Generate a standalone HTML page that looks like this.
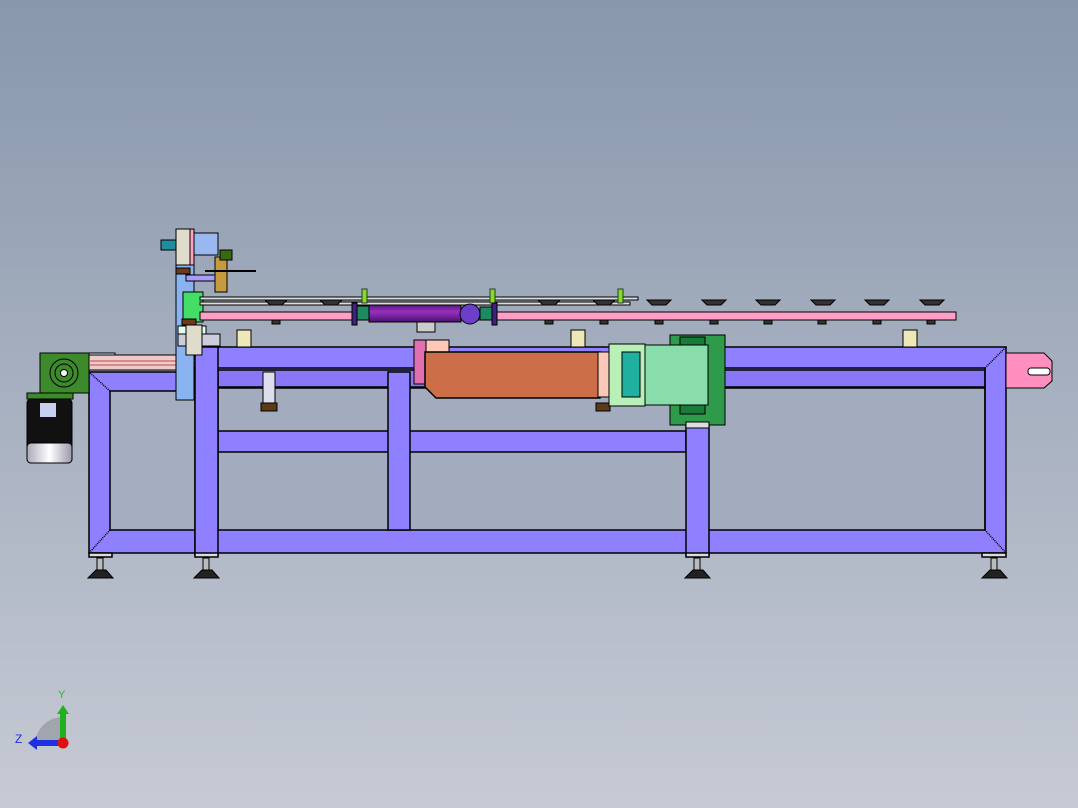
<!DOCTYPE html>
<html><head><meta charset="utf-8"><style>
html,body{margin:0;padding:0;width:1078px;height:808px;overflow:hidden}
svg{display:block}
</style></head><body>
<svg width="1078" height="808" viewBox="0 0 1078 808" xmlns="http://www.w3.org/2000/svg">
<defs>
<linearGradient id="bg" x1="0" y1="0" x2="0" y2="1">
<stop offset="0" stop-color="#8897ac"/><stop offset="1" stop-color="#c6cad4"/>
</linearGradient>
<linearGradient id="cyl" x1="0" y1="0" x2="0" y2="1">
<stop offset="0" stop-color="#5a1a80"/><stop offset="0.4" stop-color="#9a30c0"/><stop offset="1" stop-color="#4a1070"/>
</linearGradient>
<linearGradient id="mot" x1="0" y1="0" x2="1" y2="0">
<stop offset="0" stop-color="#aab"/><stop offset="0.5" stop-color="#fff"/><stop offset="1" stop-color="#99a"/>
</linearGradient>
</defs>
<rect width="1078" height="808" fill="url(#bg)"/>
<g stroke="#000" stroke-width="1.5">
<!-- frame left section -->
<rect x="89" y="372" width="110" height="181" fill="#8f80ff"/>
<rect x="110" y="391" width="90" height="139" fill="#a5aec0"/>
<!-- main frame -->
<rect x="195" y="347" width="811" height="206" fill="#8f80ff"/>
<rect x="218" y="388" width="767" height="142" fill="#a3acbf"/>
<rect x="218" y="370" width="767" height="17" fill="#8878f8"/>
<line x1="218" y1="368" x2="985" y2="368"/>
<!-- inner bars -->
<rect x="218" y="431" width="468" height="21" fill="#8f80ff"/>
<rect x="388" y="372" width="22" height="158" fill="#8f80ff"/>
<rect x="195" y="347" width="23" height="208" fill="#8f80ff"/>
<rect x="686" y="425" width="23" height="130" fill="#8f80ff"/>
<line x1="985" y1="368" x2="985" y2="530"/>
<line x1="985" y1="368" x2="1006" y2="347" stroke-dasharray="1 1"/>
<line x1="985" y1="530" x2="1006" y2="553" stroke-dasharray="1 1"/>
<line x1="110" y1="530" x2="89" y2="553" stroke-dasharray="1 1"/>
<line x1="110" y1="391" x2="89" y2="372" stroke-dasharray="1 1"/>
<!-- feet -->
<g fill="#ddd">
<rect x="89" y="553" width="23" height="4"/><rect x="195" y="553" width="23" height="4"/>
<rect x="686" y="553" width="23" height="4"/><rect x="982" y="553" width="24" height="4"/>
</g>
</g>
<g fill="#222" stroke="#000">
<path d="M88 578 L96 570 L106 570 L113 578 Z"/><rect x="97" y="558" width="6" height="12" fill="#bbb"/>
<path d="M194 578 L202 570 L212 570 L219 578 Z"/><rect x="203" y="558" width="6" height="12" fill="#bbb"/>
<path d="M685 578 L693 570 L703 570 L710 578 Z"/><rect x="694" y="558" width="6" height="12" fill="#bbb"/>
<path d="M982 578 L990 570 L1000 570 L1007 578 Z"/><rect x="991" y="558" width="6" height="12" fill="#bbb"/>
</g>
<!-- pink end cap -->
<path d="M1006 353 L1044 353 L1052 361 L1052 381 L1044 388 L1006 388 Z" fill="#ff8fbf" stroke="#000"/>
<rect x="1028" y="368" width="22" height="7" rx="3" fill="#fff" stroke="#000"/>
<!-- gearbox and motor -->
<rect x="40" y="353" width="49" height="40" fill="#3d8a2c" stroke="#000"/>
<circle cx="64" cy="373" r="14" fill="none" stroke="#000"/><circle cx="64" cy="373" r="9" fill="none" stroke="#000"/><circle cx="64" cy="373" r="3.5" fill="#fff" stroke="#000"/>
<rect x="89" y="353" width="26" height="17" fill="#cfefff" stroke="#000"/>
<rect x="89" y="355" width="106" height="15" fill="#f2c8c8" stroke="#000"/>
<line x1="89" y1="361" x2="195" y2="361" stroke="#a55"/><line x1="89" y1="365" x2="195" y2="365" stroke="#a55"/>
<rect x="27" y="393" width="46" height="6" fill="#3d8a2c" stroke="#000"/>
<rect x="27" y="399" width="45" height="64" rx="4" fill="#111" stroke="#000"/>
<rect x="27" y="443" width="45" height="20" rx="4" fill="url(#mot)" stroke="#000"/>
<rect x="40" y="403" width="16" height="14" fill="#c8d0f0"/>
<!-- left tower -->
<rect x="176" y="245" width="18" height="155" fill="#8ab4f0" stroke="#000"/>
<rect x="176" y="229" width="14" height="36" fill="#e0dccc" stroke="#000"/>
<rect x="190" y="229" width="4" height="36" fill="#ff9fc0" stroke="#000"/>
<rect x="194" y="233" width="24" height="22" fill="#9ab8f0" stroke="#000"/>
<rect x="161" y="240" width="15" height="10" fill="#1f8ca0" stroke="#000"/>
<rect x="176" y="268" width="14" height="6" fill="#6a3a1a" stroke="#000"/>
<rect x="186" y="275" width="30" height="6" fill="#a99cf8" stroke="#000"/>
<rect x="215" y="257" width="12" height="35" fill="#c89a40" stroke="#000"/>
<rect x="220" y="250" width="12" height="10" fill="#3a6a10" stroke="#000"/>
<line x1="205" y1="271" x2="256" y2="271" stroke="#000" stroke-width="2"/>
<rect x="183" y="292" width="20" height="30" fill="#44dd66" stroke="#000"/>
<rect x="178" y="326" width="28" height="8" fill="#dfe" stroke="#000"/>
<rect x="178" y="334" width="42" height="12" fill="#ccd" stroke="#000"/>
<rect x="186" y="325" width="16" height="30" fill="#e0dccc" stroke="#000"/>
<rect x="182" y="319" width="14" height="6" fill="#6a3a1a" stroke="#000"/>
<!-- upper rails -->
<rect x="200" y="297" width="438" height="3" fill="#ddd" stroke="#000"/>
<rect x="200" y="302" width="430" height="3" fill="#ddd" stroke="#000"/>
<rect x="200" y="312" width="756" height="8" fill="#ff9fc8" stroke="#000"/>
<!-- suction cups -->
<g fill="#333" stroke="#000">
<path d="M265 300 h22 l-5 5 h-12 z"/><path d="M320 300 h22 l-5 5 h-12 z"/>
<path d="M538 300 h22 l-5 5 h-12 z"/><path d="M593 300 h22 l-5 5 h-12 z"/>
<path d="M647 300 h24 l-5 5 h-14 z"/><path d="M702 300 h24 l-5 5 h-14 z"/>
<path d="M756 300 h24 l-5 5 h-14 z"/><path d="M811 300 h24 l-5 5 h-14 z"/>
<path d="M865 300 h24 l-5 5 h-14 z"/><path d="M920 300 h24 l-5 5 h-14 z"/>
<rect x="272" y="320" width="8" height="4"/><rect x="545" y="320" width="8" height="4"/>
<rect x="600" y="320" width="8" height="4"/><rect x="655" y="320" width="8" height="4"/>
<rect x="710" y="320" width="8" height="4"/><rect x="764" y="320" width="8" height="4"/>
<rect x="818" y="320" width="8" height="4"/><rect x="873" y="320" width="8" height="4"/>
<rect x="927" y="320" width="8" height="4"/>
</g>
<g fill="#7fe020" stroke="#333">
<rect x="362" y="289" width="5" height="14"/><rect x="490" y="289" width="5" height="14"/><rect x="618" y="289" width="5" height="14"/>
</g>
<!-- cylinders -->
<rect x="352" y="303" width="5" height="22" fill="#402080" stroke="#000"/>
<rect x="357" y="306" width="12" height="14" fill="#1d8a60" stroke="#000"/>
<rect x="369" y="305" width="92" height="17" fill="url(#cyl)" stroke="#000"/>
<circle cx="470" cy="314" r="10" fill="#6a40c8" stroke="#000"/>
<rect x="480" y="307" width="12" height="13" fill="#1d8a60" stroke="#000"/>
<rect x="492" y="303" width="5" height="22" fill="#402080" stroke="#000"/>
<!-- small posts under rail -->
<rect x="237" y="330" width="14" height="17" fill="#eee8b8" stroke="#000"/>
<rect x="571" y="330" width="14" height="17" fill="#eee8b8" stroke="#000"/>
<rect x="903" y="330" width="14" height="17" fill="#eee8b8" stroke="#000"/>
<rect x="263" y="372" width="12" height="32" fill="#dde" stroke="#000"/>
<rect x="261" y="403" width="16" height="8" fill="#5a3a1a" stroke="#000"/>
<rect x="596" y="403" width="14" height="8" fill="#5a3a1a" stroke="#000"/>
<rect x="417" y="322" width="18" height="10" fill="#ccc" stroke="#000"/>
<!-- orange box -->
<rect x="414" y="340" width="35" height="12" fill="#fcc8b8" stroke="#000"/>
<rect x="414" y="340" width="12" height="44" fill="#e070b0" stroke="#000"/>
<path d="M425 352 H600 V398 H436 L425 387 Z" fill="#cc6e48" stroke="#000" stroke-width="1.5"/>
<rect x="598" y="352" width="22" height="45" fill="#fcc8b8" stroke="#000"/>
<rect x="609" y="344" width="36" height="62" fill="#b8f0b8" stroke="#000"/>
<rect x="622" y="352" width="18" height="45" fill="#20b0a0" stroke="#000"/>
<rect x="670" y="335" width="55" height="90" fill="#2e9a4a" stroke="#000"/>
<rect x="645" y="345" width="63" height="60" fill="#88ddaa" stroke="#000"/>
<rect x="680" y="337" width="25" height="8" fill="#1a7a3a" stroke="#000"/>
<rect x="680" y="405" width="25" height="9" fill="#1a7a3a" stroke="#000"/>
<rect x="686" y="422" width="23" height="6" fill="#ddd" stroke="#000"/>
</g>
<!-- axis triad -->
<path d="M35 745 A28 28 0 0 1 63 717 L63 745 Z" fill="#8a8f98" opacity="0.6"/>
<rect x="60" y="712" width="6" height="30" fill="#20b020"/>
<path d="M57 714 L63 705 L69 714 Z" fill="#20b020"/>
<rect x="36" y="740" width="24" height="6" fill="#2030e0"/>
<path d="M37 736 L28 743 L37 750 Z" fill="#2030e0"/>
<circle cx="63" cy="743" r="5.5" fill="#e01010"/>
<text x="58" y="698" font-family="Liberation Sans, sans-serif" font-size="11" fill="#20c020">Y</text>
<text x="15" y="743" font-family="Liberation Sans, sans-serif" font-size="12" fill="#2030e0">Z</text>
</svg>
</body></html>
